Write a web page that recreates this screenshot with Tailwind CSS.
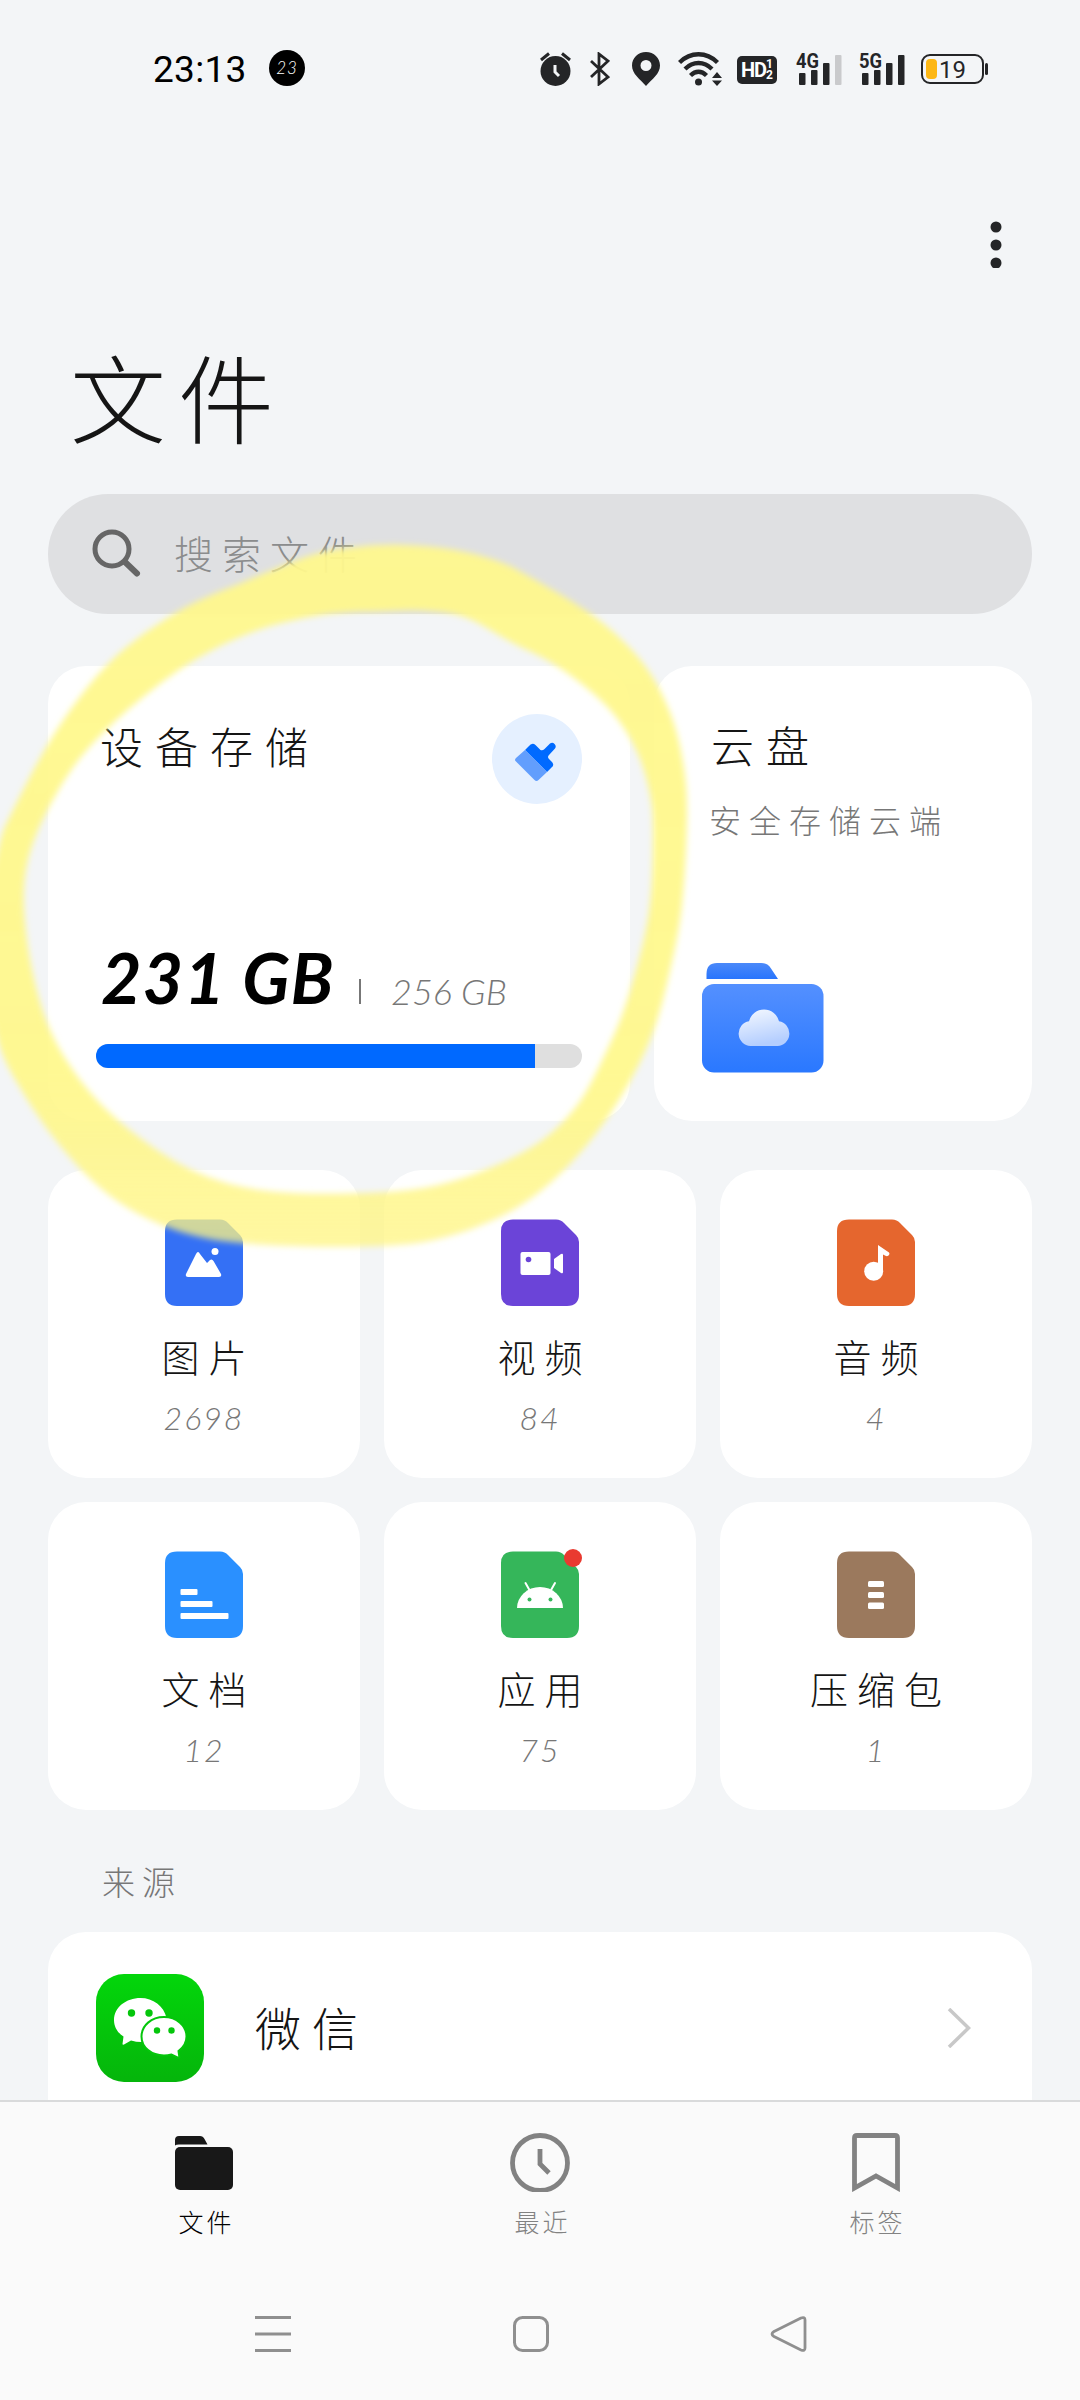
<!DOCTYPE html>
<html lang="zh-CN">
<head>
<meta charset="utf-8">
<title>文件</title>
<script src="https://cdn.jsdelivr.net/npm/@tailwindcss/browser@4"></script>
</head>
<body class="bg-[#f3f5f7]">
<div class="relative flex h-[2400px] w-[1080px] flex-col overflow-hidden bg-[#f3f5f7] font-['Noto_Sans_CJK_SC',sans-serif] font-light text-[#151515]">

  <!-- Status bar -->
  <header class="flex h-[136px] items-center pl-[153px] pr-[92px]">
    <span class="w-[116px] pt-[3px] font-['Roboto',sans-serif] text-[37px] leading-[40px] tracking-[0.3px] font-normal text-black">23:13</span>
    <span class="flex size-9 items-center justify-center rounded-full bg-black font-['Lato',sans-serif] text-[17px] italic tracking-[1px] text-white">23</span>
    <div class="ml-auto flex items-center pt-[2px] text-[#242527]">
      <svg class="mr-[19px] h-[34px] w-[31px]" viewBox="0 0 31 34" fill="none"><circle cx="15.500" cy="19" r="15" fill="currentColor"/><path d="M1 8 9 1.500M30 8l-8-6.500" stroke="currentColor" stroke-width="3"/><path d="M15 13v7l4 4" stroke="#f3f5f7" stroke-width="3"/></svg>
      <svg class="mr-[22px] h-[34px] w-[20px]" viewBox="0 0 20 34" fill="none" stroke="currentColor" stroke-width="2.800"><path d="m1 9 17 16-9 7V2l9 7L1 25"/></svg>
      <svg class="mr-[18px] h-[34px] w-[28px]" viewBox="0 0 28 34"><path fill="currentColor" fill-rule="evenodd" d="M14 0C6 0 0 6 0 13.500 0 22 8 27 14 34c6-7 14-12 14-20.500C28 6 22 0 14 0Zm0 8a5.500 5.500 0 1 1 0 11 5.500 5.500 0 0 1 0-11Z"/></svg>
      <svg class="mr-[15px] h-[34px] w-[44px]" viewBox="0 0 44 34" fill="none" stroke="currentColor" stroke-width="4.300"><path d="M1.500 10.500c11-11 27-11 38 0M7 17c8-8 19-8 27 0M12.500 23.500c5-5 11-5 16 0"/><circle cx="20.500" cy="30" r="3.500" fill="currentColor" stroke="none"/><path d="m34 26 5-6 5 6ZM34 28.500h10l-5 5.500Z" fill="currentColor" stroke="none"/></svg>
      <span class="mt-[2px] mr-[19px] flex h-[28px] w-[40px] items-center justify-center rounded-[5px] bg-[#242527] font-['Roboto',sans-serif] font-bold text-white"><span class="text-[20px] leading-none tracking-[-1px]">HD</span><span class="flex flex-col text-[12px] leading-[11px]"><span>1</span><span>2</span></span></span>
      <svg class="mr-[17px] h-[34px] w-[46px] overflow-visible" viewBox="0 0 46 34" fill="currentColor"><text x="0" y="15.500" font-family="Roboto" font-weight="700" font-size="21" textLength="23" lengthAdjust="spacingAndGlyphs">4G</text><rect x="3" y="21" width="6.500" height="12" rx="1"/><rect x="15" y="18" width="6.500" height="15" rx="1"/><rect x="27" y="11" width="6.500" height="22" rx="1"/><rect x="39" y="3" width="6.500" height="30" rx="1" fill="#c9cacc"/></svg>
      <svg class="mr-[16px] h-[34px] w-[46px] overflow-visible" viewBox="0 0 46 34" fill="currentColor"><text x="0" y="15.500" font-family="Roboto" font-weight="700" font-size="21" textLength="23" lengthAdjust="spacingAndGlyphs">5G</text><rect x="3" y="21" width="6.500" height="12" rx="1"/><rect x="15" y="18" width="6.500" height="15" rx="1"/><rect x="27" y="11" width="6.500" height="22" rx="1"/><rect x="39" y="3" width="6.500" height="30" rx="1"/></svg>
      <svg class="h-[34px] w-[67px]" viewBox="0 0 67 34"><rect x="1" y="3" width="61" height="28" rx="8" fill="none" stroke="currentColor" stroke-width="2"/><rect x="64" y="11" width="3" height="12" rx="1.500" fill="currentColor"/><rect x="5" y="7" width="11" height="20" rx="4" fill="#fdb714"/><text x="18" y="26" font-family="Roboto" font-size="24" font-weight="400" fill="currentColor">19</text></svg>
    </div>
  </header>

  <div class="flex h-[180px] justify-end pt-[84px] pr-[78px]">
    <svg class="h-12 w-3" viewBox="0 0 12 48" fill="#242527"><circle cx="6" cy="7" r="5.500"/><circle cx="6" cy="25" r="5.500"/><circle cx="6" cy="43" r="5.500"/></svg>
  </div>

  <h1 class="mb-[36px] h-[142px] pt-[9px] pl-[70px] text-[96px] leading-[140px] font-light tracking-[12px]">文件</h1>

  <!-- Search -->
  <div class="mx-12 flex h-[120px] items-center rounded-full bg-[#dfe0e2] pl-[44px]">
    <svg class="mr-[32px] size-[50px]" viewBox="0 0 50 50" fill="none" stroke="#666" stroke-width="5" stroke-linecap="round"><circle cx="20" cy="20" r="17"/><path stroke-width="6" d="m33 33 12 11.500"/></svg>
    <span class="pb-[5px] text-[39px] leading-[60px] tracking-[9px] text-[#8b8c8d]">搜索文件</span>
  </div>

  <!-- Storage cards -->
  <section class="mx-12 mt-[52px] flex h-[455px] gap-6">
    <div class="flex w-[582px] flex-col rounded-[38px] bg-white px-12 pt-12">
      <div class="flex justify-between">
        <h2 class="mt-[1px] pl-1 text-[43px] leading-[60px] tracking-[12px]">设备存储</h2>
        <svg class="size-[90px]" viewBox="0 0 90 90"><circle cx="45" cy="45" r="45" fill="#e5f0ff"/><path fill="#006aff" d="m33 36 3.500-3.500Q40 28 43.500 31l5 5q2 1 4-1l5.500-5.500a3.600 3.600 0 0 1 5 5L57 41q-2 2 0 4l2.500 2.500q3.500 3.500 0 6L55 58Z"/><path fill="#629efd" d="m33 36-9 8q-2 2 0 3.500L42.500 66q2 2 4 0L55 58Z"/></svg>
      </div>
      <div class="mt-[132px] flex h-[100px] items-end pb-[19px] pl-[5px] font-['Lato',sans-serif] italic">
        <span class="w-[255px] text-[70px] leading-[80px] font-bold tracking-[1px] whitespace-nowrap text-black">231 GB</span>
        <span class="mr-[30px] mb-[13px] ml-[3px] h-[25px] w-[2px] bg-[#777]"></span>
        <span class="-mb-1 text-[36px] leading-[60px] font-light text-[#777] whitespace-nowrap">256 GB</span>
      </div>
      <div class="mt-2 h-6 overflow-hidden rounded-full bg-[#dfdfdf]"><div class="h-full bg-[#0069ff]" style="width:90.3%"></div></div>
    </div>
    <div class="w-[378px] rounded-[38px] bg-white pt-[48px] pl-12">
      <h2 class="pl-[9px] text-[43px] leading-[60px] tracking-[12px]">云盘</h2>
      <p class="mt-[21px] pl-[7px] text-[32px] leading-[48px] tracking-[8px] text-[#777]">安全存储云端</p>
      <svg class="mt-[120px] h-[110px] w-[122px]" viewBox="0 0 122 110">
        <defs><linearGradient id="tab" x2="0" y2="1"><stop stop-color="#4b89f9"/><stop offset="1" stop-color="#2875fd"/></linearGradient><linearGradient id="fold" x2="0" y2="1"><stop stop-color="#5490ff"/><stop offset="1" stop-color="#2a78ff"/></linearGradient><linearGradient id="cld" x2="0.300" y2="1"><stop stop-color="#f5f9ff"/><stop offset="1" stop-color="#b4ceff"/></linearGradient></defs>
        <path fill="url(#tab)" d="M4.500 16V11Q4.500 0 15 0h44q7 0 10 5.500L76 16Z"/><rect y="21" width="121.500" height="88.500" rx="12" fill="url(#fold)"/><path fill="url(#cld)" d="M48.500 83a12.500 12.500 0 0 1-1.500-24.800 15.500 15.500 0 0 1 30 0A12.500 12.500 0 0 1 75.500 83Z"/></svg>
    </div>
  </section>

  <!-- Categories -->
  <section class="mx-12 mt-[49px] grid grid-cols-3 gap-6 text-center">
    <div class="flex h-[308px] flex-col items-center rounded-[38px] bg-white pt-[49px]">
      <svg class="h-[88px] w-[78px]" viewBox="0 0 78 88"><path fill="#3470f5" d="M12 .5h43q5 0 8 3.500L75 16q3 3 3 7v52q0 12-12 12H12Q0 87 0 75V12Q0 .5 12 .5Z"/><path fill="#fff" d="M21 55 31 35q2-4 4 0l7 9 3-3q2-1.500 3.500 1L56 55q1 3-2 3H23q-3 0-2-3Z"/><circle cx="50" cy="32.500" r="3.500" fill="#fff"/></svg>
      <span class="mt-[21px] pl-[9px] text-[38px] leading-[56px] tracking-[9px]">图片</span>
      <span class="mt-[11px] font-['Lato',sans-serif] text-[32px] leading-[46px] tracking-[2px] text-[#777] italic">2698</span>
    </div>
    <div class="flex h-[308px] flex-col items-center rounded-[38px] bg-white pt-[49px]">
      <svg class="h-[88px] w-[78px]" viewBox="0 0 78 88"><path fill="#6b44d8" d="M12 .5h43q5 0 8 3.500L75 16q3 3 3 7v52q0 12-12 12H12Q0 87 0 75V12Q0 .5 12 .5Z"/><rect x="19.500" y="33" width="30" height="23" rx="2" fill="#fff"/><path d="m53 40 7-5q2-1 2 1v17q0 2-2 1l-7-5Z" fill="#fff"/><circle cx="27.500" cy="40.500" r="2.800" fill="#6b44d8"/></svg>
      <span class="mt-[21px] pl-[9px] text-[38px] leading-[56px] tracking-[9px]">视频</span>
      <span class="mt-[11px] font-['Lato',sans-serif] text-[32px] leading-[46px] tracking-[2px] text-[#777] italic">84</span>
    </div>
    <div class="flex h-[308px] flex-col items-center rounded-[38px] bg-white pt-[49px]">
      <svg class="h-[88px] w-[78px]" viewBox="0 0 78 88"><path fill="#e5662e" d="M12 .5h43q5 0 8 3.500L75 16q3 3 3 7v52q0 12-12 12H12Q0 87 0 75V12Q0 .5 12 .5Z"/><circle cx="36.700" cy="52.300" r="9.500" fill="#fff"/><path d="M41 26 52 33.500q1 1 0 2.500-1 1.500-3 1l-3-1.500V52h-5Z" fill="#fff"/></svg>
      <span class="mt-[21px] pl-[9px] text-[38px] leading-[56px] tracking-[9px]">音频</span>
      <span class="mt-[11px] font-['Lato',sans-serif] text-[32px] leading-[46px] tracking-[2px] text-[#777] italic">4</span>
    </div>
    <div class="flex h-[308px] flex-col items-center rounded-[38px] bg-white pt-[49px]">
      <svg class="h-[88px] w-[78px]" viewBox="0 0 78 88"><path fill="#2a90ff" d="M12 .5h43q5 0 8 3.500L75 16q3 3 3 7v52q0 12-12 12H12Q0 87 0 75V12Q0 .5 12 .5Z"/><g fill="#fff"><rect x="15.500" y="38" width="17" height="6" rx="1"/><rect x="15.500" y="50" width="32" height="6" rx="1"/><rect x="15.500" y="62" width="48" height="6" rx="1"/></g></svg>
      <span class="mt-[21px] pl-[9px] text-[38px] leading-[56px] tracking-[9px]">文档</span>
      <span class="mt-[11px] font-['Lato',sans-serif] text-[32px] leading-[46px] tracking-[2px] text-[#777] italic">12</span>
    </div>
    <div class="flex h-[308px] flex-col items-center rounded-[38px] bg-white pt-[49px]">
      <svg class="h-[88px] w-[78px] overflow-visible" viewBox="0 0 78 88"><path fill="#35b65a" d="M12 .5h43q5 0 8 3.500L75 16q3 3 3 7v52q0 12-12 12H12Q0 87 0 75V12Q0 .5 12 .5Z"/><path fill="#fff" d="M16 57a23 21 0 0 1 46 0Z"/><path stroke="#fff" stroke-width="2" stroke-linecap="round" d="m24.500 32 4.500 8m25-8-4.500 8"/><g fill="#35b65a"><circle cx="28.500" cy="48.500" r="2"/><circle cx="49.500" cy="48.500" r="2"/></g><circle cx="72" cy="7" r="9" fill="#e93a30"/></svg>
      <span class="mt-[21px] pl-[9px] text-[38px] leading-[56px] tracking-[9px]">应用</span>
      <span class="mt-[11px] font-['Lato',sans-serif] text-[32px] leading-[46px] tracking-[2px] text-[#777] italic">75</span>
    </div>
    <div class="flex h-[308px] flex-col items-center rounded-[38px] bg-white pt-[49px]">
      <svg class="h-[88px] w-[78px]" viewBox="0 0 78 88"><path fill="#9b795d" d="M12 .5h43q5 0 8 3.500L75 16q3 3 3 7v52q0 12-12 12H12Q0 87 0 75V12Q0 .5 12 .5Z"/><g fill="#fff"><rect x="31" y="30" width="16" height="6" rx="1.500"/><rect x="31" y="41" width="16" height="6" rx="1.500"/><rect x="31" y="51.500" width="16" height="6.500" rx="1.500"/></g></svg>
      <span class="mt-[21px] pl-[9px] text-[38px] leading-[56px] tracking-[9px]">压缩包</span>
      <span class="mt-[11px] font-['Lato',sans-serif] text-[32px] leading-[46px] tracking-[2px] text-[#777] italic">1</span>
    </div>
  </section>

  <!-- Sources -->
  <h3 class="mt-[47px] h-[75px] pl-[102px] text-[33px] leading-[48px] tracking-[7px] text-[#777]">来源</h3>
  <div class="mx-12 flex h-[168px] items-start rounded-t-[38px] bg-white pt-[42px] pr-[60px] pl-12">
    <svg class="size-[108px]" viewBox="0 0 108 108">
      <defs><linearGradient id="wx" x2="0" y2="1"><stop stop-color="#03d60b"/><stop offset="1" stop-color="#05b50b"/></linearGradient></defs>
      <rect width="108" height="108" rx="28" fill="url(#wx)"/>
      <path fill="#fff" d="M44.500 24C30 24 18 33.500 18 46c0 7.500 4 13 9.500 16.500L26.500 70q0 1 1.500.5l7-4q5 1.500 10.500 1.500C71 68 71 50 70.500 44 68 32 57 24 44.500 24Z"/>
      <path fill="#fff" stroke="#04c60b" stroke-width="2" d="M68 43C55.500 43 45.500 51.500 45.500 62.500S55.500 81.500 68 81.500q4 0 7.500-1l7 3.500q1 0 .8-1.200L82.500 77C88 73 90.500 68 90.500 62.500 90.500 51.500 80.500 43 68 43Z"/>
      <g fill="#04c60b"><circle cx="35.500" cy="39" r="3.700"/><circle cx="53" cy="39" r="3.700"/><circle cx="61" cy="56.500" r="3.200"/><circle cx="75.500" cy="56.500" r="3.200"/></g>
    </svg>
    <span class="ml-[51px] pt-[22px] text-[46px] leading-[60px] tracking-[11px]">微信</span>
    <svg class="mt-[34px] ml-auto h-[40px] w-[26px]" viewBox="0 0 26 40" fill="none" stroke="#c8c8c8" stroke-width="3.500"><path d="m3 1 19.500 19L3 39"/></svg>
  </div>

  <!-- Tabs -->
  <nav class="grid h-[152px] grid-cols-3 border-t-2 border-[#d9dadb] bg-[#fafafa] px-9 pt-[28px] text-[25px] leading-[36px] tracking-[3px] text-[#828282]">
    <div class="flex flex-col items-center text-black">
      <svg class="h-[62px] w-[62px]" viewBox="0 0 62 62" fill="#181818"><path d="M2 15.500V10q0-4 4-4h21q3 0 4.500 3l3 5.500H6q-3 0-4 1Z"/><rect x="2" y="17" width="58" height="43" rx="5"/></svg>
      <span class="mt-[11px] pl-[5px]">文件</span>
    </div>
    <div class="flex flex-col items-center">
      <svg class="h-[62px] w-[62px]" viewBox="0 0 62 62" fill="none" stroke="#828282" stroke-width="4.800"><circle cx="31" cy="33" r="27.500"/><path d="M31 19v15l9 9"/></svg>
      <span class="mt-[11px] pl-[5px]">最近</span>
    </div>
    <div class="flex flex-col items-center">
      <svg class="h-[62px] w-[62px]" viewBox="0 0 62 62" fill="none" stroke="#828282" stroke-width="4.800"><path d="M9.500 8q0-2.500 2.500-2.500h38q2.500 0 2.500 2.500v50L31 46 9.500 58Z"/></svg>
      <span class="mt-[11px] pl-[3px]">标签</span>
    </div>
  </nav>
  <div class="flex h-[148px] items-start gap-[220px] bg-[#fafafa] pt-[63px] pl-[254px]">
    <svg class="size-[38px]" viewBox="0 0 38 38" stroke="#8f8f8f" stroke-width="3"><path d="M1 2.500h36M1 19h36M1 35.500h36"/></svg>
    <svg class="size-[38px]" viewBox="0 0 38 38" fill="none" stroke="#8f8f8f" stroke-width="3"><rect x="2.500" y="2.500" width="33" height="33" rx="8"/></svg>
    <svg class="size-[38px]" viewBox="0 0 38 38" fill="none" stroke="#8f8f8f" stroke-width="2.800" stroke-linejoin="round"><path d="M4 16.500 31 3q4-1.500 4 2v28q0 3.500-4 2L4 21.500q-4-2.500 0-5Z"/></svg>
  </div>

  <!-- Highlighter stroke -->
  <svg class="pointer-events-none absolute top-0 left-0 h-[1300px] w-[720px]" viewBox="0 0 720 1300">
    <defs><linearGradient id="ink" gradientUnits="userSpaceOnUse" x1="0" y1="540" x2="0" y2="1250"><stop stop-color="#fff88d" stop-opacity=".95"/><stop offset=".75" stop-color="#fff88b" stop-opacity=".93"/><stop offset="1" stop-color="#fff580" stop-opacity=".74"/></linearGradient>
    <filter id="soft"><feGaussianBlur stdDeviation="3"/></filter></defs>
    <path id="ring" fill="url(#ink)" fill-rule="evenodd" filter="url(#soft)"/>
  </svg>
</div>
<script>
  const outer = [[402,545],[455,550],[500,562],[530,577],[585,610],[622,640],[650,673],[671,715],[683,762],[687,815],[682,905],[669,975],[650,1040],[614,1108],[567,1167],[513,1210],[446,1237],[379,1246],[268,1245],[188,1234],[120,1203],[67,1154],[22,1091],[-4,1034],[-18,940],[-2,850],[13,810],[58,728],[112,660],[179,611],[246,581],[312,555],[357,547]];
  const inner = [[388,611],[430,611],[467,618],[513,643],[552,663],[589,690],[616,717],[637,752],[649,790],[653,830],[649,912],[629,994],[607,1050],[575,1108],[527,1150],[446,1183],[366,1193],[268,1191],[201,1174],[143,1140],[89,1091],[48,1025],[27,940],[27,864],[58,791],[103,733],[179,670],[250,633],[321,615]];
  // Closed Catmull-Rom spline through the points
  function spline(p) {
    const n = p.length;
    let d = `M${p[0]}`;
    for (let i = 0; i < n; i++) {
      const a = p[(i + n - 1) % n], b = p[i], c = p[(i + 1) % n], e = p[(i + 2) % n];
      d += `C${b[0] + (c[0] - a[0]) / 6},${b[1] + (c[1] - a[1]) / 6} ${c[0] - (e[0] - b[0]) / 6},${c[1] - (e[1] - b[1]) / 6} ${c}`;
    }
    return d + 'Z';
  }
  document.getElementById('ring').setAttribute('d', spline(outer) + spline(inner));
</script>
</body>
</html>
